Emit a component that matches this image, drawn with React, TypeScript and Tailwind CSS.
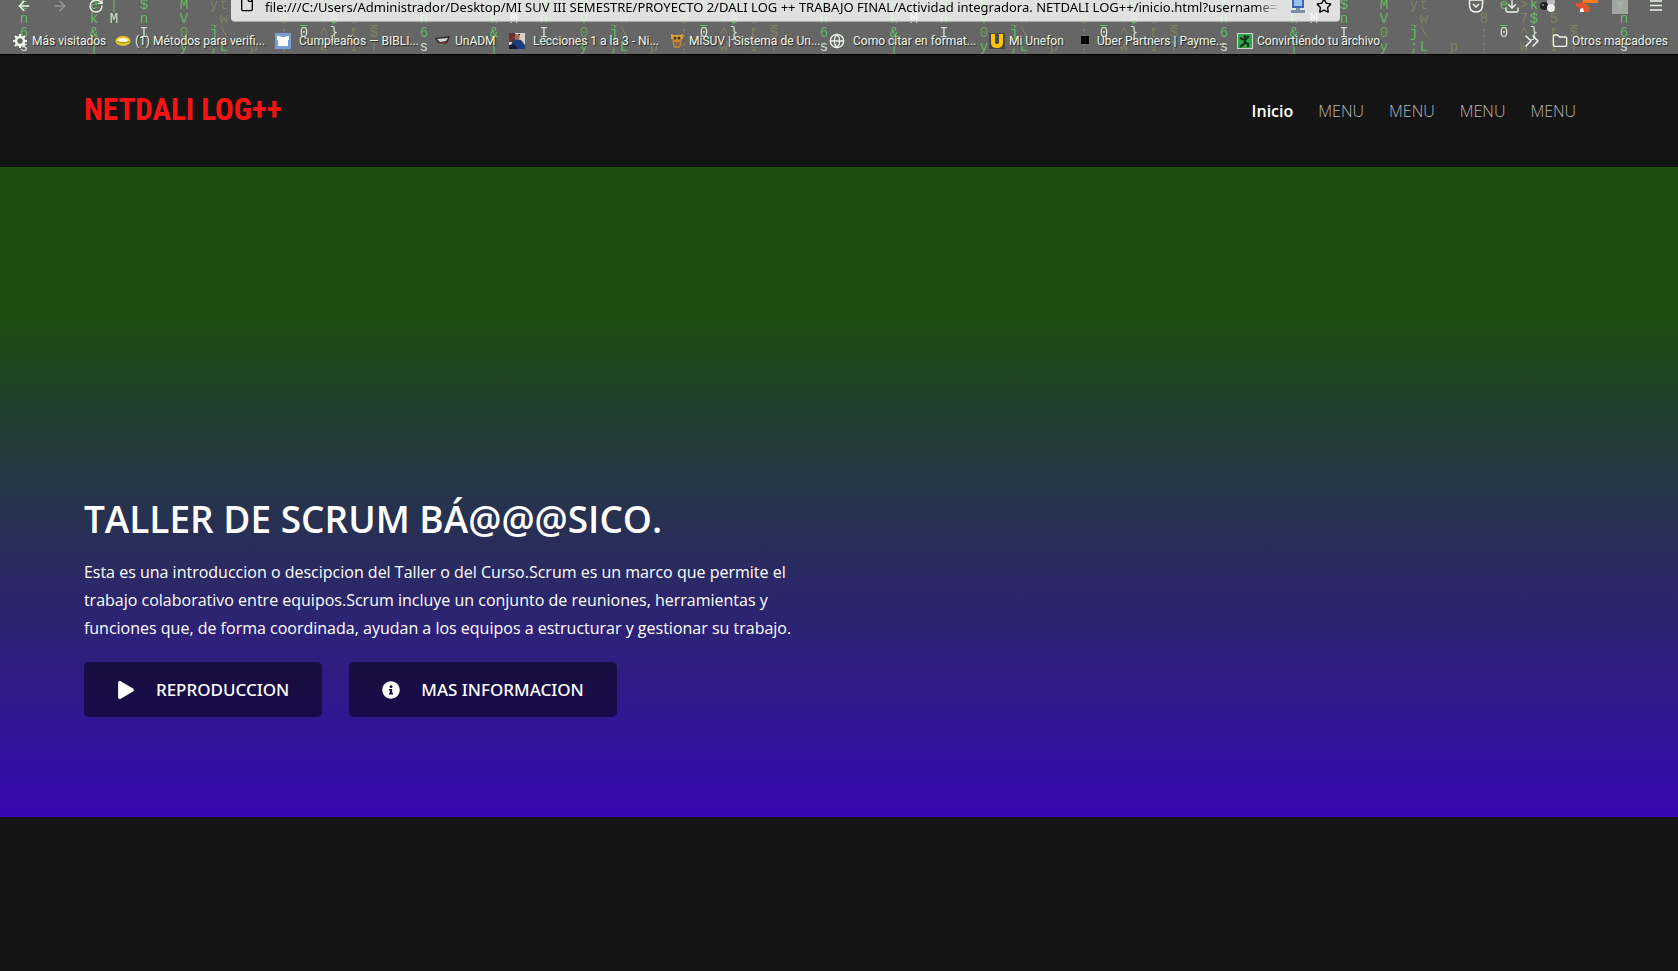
import React from "react";
import {
  ArrowLeft, ArrowRight, RotateCw, File, Globe, Folder, ChevronsRight, Star, Download,
} from "lucide-react";
import { FaPlay, FaInfoCircle } from "react-icons/fa";

type Glyph = [number, number, string, string];

const GREEN = "#5fbf5f";
const PALE = "#cfe3cf";
const DIM = "#7f8060";

const glyphs: Glyph[] = [
  [24, 0, "t", GREEN], [94, 0, "e", GREEN], [114, 0, "|", GREEN], [144, 0, "$", GREEN], [184, 0, "M", GREEN],
  [214, 0, "y", DIM], [224, 0, "t", DIM], [284, 0, "'", DIM], [304, 0, "e", GREEN], [324, 0, ">", DIM], [334, 0, "k", GREEN],
  [24, 1, "n", GREEN], [94, 1, "k", GREEN], [114, 1, "M", PALE], [144, 1, "n", GREEN], [184, 1, "V", GREEN],
  [224, 1, "w", DIM], [284, 1, "8", DIM], [324, 1, "7", DIM], [334, 1, "$", GREEN], [354, 1, "5", DIM],
  [24, 2, "6", GREEN], [94, 2, "&", GREEN], [144, 2, "I", PALE], [184, 2, "0", "#6f9a60"], [214, 2, "j", GREEN],
  [224, 2, "\\", DIM], [284, 2, ":", DIM], [304, 2, "0", PALE], [324, 2, "^", DIM], [334, 2, "}", PALE],
  [354, 2, "t", DIM], [374, 2, "$", DIM],
  [24, 3, "s", PALE], [94, 3, "|", GREEN], [184, 3, "y", GREEN], [214, 3, ";", GREEN], [224, 3, "L", GREEN],
  [254, 3, "p", DIM], [284, 3, ":", DIM], [324, 3, "W", DIM], [354, 3, "I", DIM], [374, 3, "T", DIM],
];
const overlines: [number, string][] = [[214, DIM], [304, GREEN], [374, DIM]];

function CodeRain() {
  return (
    <svg aria-hidden="true" className="absolute inset-0 h-full w-full">
      <defs>
        <pattern id="code-rain" width="400" height="56" patternUnits="userSpaceOnUse">
          <g fontFamily='"Liberation Mono", monospace' fontSize="14" textAnchor="middle">
            {glyphs.map(([x, row, ch, color]) => (
              <text key={`${x}-${row}`} x={x} y={9 + row * 14} fill={color}>{ch}</text>
            ))}
            {overlines.map(([x, color]) => (
              <path key={x} d={`M${x - 4} 25.5h8`} stroke={color} />
            ))}
          </g>
        </pattern>
      </defs>
      <rect width="100%" height="100%" fill="url(#code-rain)" />
    </svg>
  );
}

const gear = (
  <svg viewBox="0 0 16 16" className="size-4" fill="none" stroke="currentColor">
    <circle cx="8" cy="8" r="4" strokeWidth="2.500" />
    <path d="M8 1v3M8 12v3M1 8h3M12 8h3M3 3l2 2M11 11l2 2M13 3l-2 2M5 11l-2 2" strokeWidth="2" />
  </svg>
);
const ring = (
  <svg viewBox="0 0 16 16" className="size-4">
    <ellipse cx="8" cy="8" rx="7.5" ry="5" fill="#e6c62a" />
    <ellipse cx="8" cy="7.5" rx="5.5" ry="2.5" fill="#f7f3c8" />
    <path d="M2 8.500q6 3 12 0" stroke="#a67c08" fill="none" />
    <path d="M4 8l4-1.500 4 2" stroke="#fff" fill="none" />
  </svg>
);
const shirt = (
  <svg viewBox="0 0 16 16" className="size-4">
    <path fill="#759fd0" d="M0 0h16v16H0z" />
    <path fill="#fff" d="M2 3h3l1 1h4l1-1h3v4h-1v6H3V7H2z" />
  </svg>
);
const mouth = (
  <svg viewBox="0 0 16 16" className="size-4">
    <path fill="#2d3230" d="M0 5l6-1 9-1-2 6-4 3H5L2 9z" />
    <path fill="#d5dad5" d="M2 6l11-1-2 3-6 1z" />
    <path d="M4 10q4 1 7-1" stroke="#c33b3b" fill="none" />
    <path d="M4 11.500h5" stroke="#3a9a55" />
  </svg>
);
const portrait = (
  <svg viewBox="0 0 16 16" className="size-4">
    <path fill="#d8cfc8" d="M0 0h16v16H0z" />
    <path fill="#6b3430" d="M0 0h6v9H0z" />
    <path fill="#1c3f7c" d="M3 9l4-3 5 1 4 5v4H2z" />
    <circle cx="8" cy="4" r="2.500" fill="#a9694d" />
    <path d="M5 3q3-4 6 0v-2H6z" fill="#22181a" />
    <path fill="#141c36" d="M0 12l5-1 4 5H0z" />
  </svg>
);
const owl = (
  <svg viewBox="0 0 16 16" className="size-4">
    <path fill="#c08a30" d="M3 4h10l-1 9-2 2H6l-2-2z" />
    <path fill="#d9a040" d="M2 1l3 1h6l3-1v5H2z" />
    <circle cx="6" cy="5" r="1.500" fill="#4a3418" />
    <circle cx="10" cy="5" r="1.500" fill="#4a3418" />
    <path stroke="#5c4a8a" d="M6 9v4M8 9v5M10 9v4" />
  </svg>
);
const unefon = (
  <svg viewBox="0 0 16 16" className="size-4">
    <path fill="#474747" d="M0 0h16v16H0z" />
    <path d="M4 1v8.500q0 3.500 4 3.500t4-3.500V1" stroke="#ffc400" strokeWidth="4" fill="none" />
  </svg>
);
const square = (
  <svg viewBox="0 0 16 16" className="size-4">
    <path fill="#000" d="M4 3h8v8H4z" />
  </svg>
);
const runner = (
  <svg viewBox="0 0 16 16" className="size-4">
    <path fill="#cfd6cf" d="M0 0h16v16H0z" />
    <path fill="#2fa346" d="M1 1h14v14H1z" />
    <path d="M3 5l5 2 4-4M8 6v4l-5 4M8 9l3 2v3" stroke="#102a16" strokeWidth="2" fill="none" />
    <circle cx="8" cy="3.500" r="1.500" fill="#102a16" />
  </svg>
);

const bookmarks: { label: string; icon: React.ReactNode; box: string }[] = [
  { label: "Más visitados", icon: gear, box: "w-[103px] gap-1" },
  { label: "(1) Métodos para verifi...", icon: ring, box: "w-[160px] gap-1" },
  { label: "Cumpleaños — BIBLI...", icon: shirt, box: "w-[160px] gap-2" },
  { label: "UnADM", icon: mouth, box: "w-[74px] gap-1" },
  { label: "Lecciones 1 a la 3 - Ni...", icon: portrait, box: "w-[160px] gap-2" },
  { label: "MiSUV | Sistema de Un...", icon: owl, box: "w-[160px] gap-1" },
  { label: "Como citar en format...", icon: <Globe className="size-4" />, box: "w-[160px] gap-2" },
  { label: "Mi Unefon", icon: unefon, box: "w-[88px] gap-1" },
  { label: "Uber Partners | Payme...", icon: square, box: "w-[160px] gap-1" },
  { label: "Convirtiéndo tu archivo", icon: runner, box: "w-[160px] gap-1" },
];

function Chrome() {
  return (
    <div className="relative h-[55px] overflow-hidden border-b border-black bg-[#666] font-['Roboto',sans-serif] text-xs text-[#eef6ea]">
      <CodeRain />
      <div className="relative flex h-[22px] items-start">
        <div className="-mt-0.5 flex w-[231px] shrink-0 gap-5 pl-4">
          <button aria-label="Atrás"><ArrowLeft className="size-4" /></button>
          <button aria-label="Adelante" className="text-[#999]"><ArrowRight className="size-4" /></button>
          <button aria-label="Recargar"><RotateCw className="size-4" /></button>
        </div>
        <div className="flex h-[22px] min-w-0 flex-1 items-start gap-2.5 rounded-b-sm border-b border-[#aaa] bg-white/80 px-2 text-black">
          <File className="-mt-1 size-4 shrink-0" />
          <div className="min-w-0 flex-1 [mask-image:linear-gradient(to_left,transparent,black_24px)]">
            <input
              aria-label="Dirección"
              readOnly
              className="-mt-0.5 h-[18px] w-full bg-transparent font-['Noto_Sans',sans-serif] text-[13px] outline-none"
              value="file:///C:/Users/Administrador/Desktop/MI SUV III SEMESTRE/PROYECTO 2/DALI LOG ++ TRABAJO FINAL/Actividad integradora. NETDALI LOG++/inicio.html?username="
            />
          </div>
          <svg viewBox="0 0 16 16" className="-mt-0.5 size-4 shrink-0">
            <path fill="#3f63ad" d="M2 0h12v10H2z" />
            <path fill="#9cc0ee" d="M4 2h8v6H4z" />
            <path fill="#7f8ea6" d="M6 10h4v2h5v3H1v-3h5z" />
          </svg>
          <button aria-label="Añadir a marcadores"><Star className="-mt-0.5 size-4" /></button>
        </div>
        <div className="-mt-0.5 flex w-[338px] shrink-0 justify-end gap-5 pr-3.5">
          <svg viewBox="0 0 16 16" className="size-4" fill="none" stroke="currentColor" strokeWidth="1.500">
            <path d="M1.500 2h13v5q0 7-6.500 7T1.500 7zM5 6l3 3 3-3" />
          </svg>
          <button aria-label="Descargas"><Download className="size-4" /></button>
          <svg viewBox="0 0 16 16" className="size-4">
            <circle cx="11" cy="4" r="4" fill="#bbb" />
            <circle cx="4" cy="8" r="4" fill="#222" />
            <circle cx="3" cy="7" r="1" fill="#999" />
            <circle cx="11" cy="10" r="4" fill="#eee" />
          </svg>
          <svg viewBox="0 0 16 16" className="size-4 overflow-visible">
            <path fill="#e0562a" d="M0 4l3 2 5-4 2 4 4 4-1 4H3l1-4-4-2z" />
            <path fill="#fff" d="M4 11l3-1 1 4H4z" />
            <path fill="#ff7a1a" d="M7 0h15v5H7z" />
          </svg>
          <svg viewBox="0 0 16 16" className="size-4">
            <path fill="#a0a6a0" d="M0 0h16v16H0z" />
            <path d="M5 5h6M8 5v6" stroke="#b0b8b0" strokeWidth="1" />
          </svg>
          <button aria-label="Menú">
            <svg viewBox="0 0 16 16" className="size-4" stroke="currentColor" strokeWidth="1.500">
              <path d="M2 3h12M2 7.500h12M2 12h12" />
            </svg>
          </button>
        </div>
      </div>
      <nav aria-label="Marcadores" className="relative flex h-[37px] items-center pl-3 [text-shadow:1px_1px_1px_#222]">
        {bookmarks.map((b) => (
          <a key={b.label} href="#" className={`flex shrink-0 items-center whitespace-nowrap ${b.box}`}>
            {b.icon}
            {b.label}
          </a>
        ))}
        <div className="ml-auto flex items-center gap-2 pr-2.5">
          <button aria-label="Más marcadores"><ChevronsRight className="size-6" strokeWidth={1.5} /></button>
          <a href="#" className="flex items-center gap-1 whitespace-nowrap"><Folder className="size-4" />Otros marcadores</a>
        </div>
      </nav>
    </div>
  );
}

const links = ["Inicio", "MENU", "MENU", "MENU", "MENU"];

export default function App() {
  return (
    <div className="min-h-screen bg-[#141414] font-['Open_Sans',sans-serif] text-white">
      <Chrome />
      <header className="flex h-28 items-center justify-between px-[5%]">
        <a href="#" className="pb-0.5 font-['Roboto_Condensed','Liberation_Sans_Narrow',sans-serif] text-[31px] font-bold text-[#f41414]">
          NETDALI LOG++
        </a>
        <nav className="flex gap-[25px] pr-[18px] text-base">
          {links.map((l, i) => (
            <a key={i} href="#" className={i === 0 ? "font-semibold" : "font-light text-[#b8b8b8]"}>{l}</a>
          ))}
        </nav>
      </header>
      <main className="flex min-h-[650px] flex-col justify-end bg-linear-to-b/srgb from-[#1c4f0b] from-21% to-[#3708b3] px-[5%] pb-[100px]">
        <h1 className="text-[37px] leading-[52px] font-semibold">TALLER DE SCRUM BÁ@@@SICO.</h1>
        <p className="mt-[13px] max-w-[740px] text-base leading-7">
          Esta es una introduccion o descipcion del Taller o del Curso.Scrum es un marco que permite el trabajo
          colaborativo entre equipos.Scrum incluye un conjunto de reuniones, herramientas y funciones que, de forma
          coordinada, ayudan a los equipos a estructurar y gestionar su trabajo.
        </p>
        <div className="mt-5 flex gap-[27px] font-['Noto_Sans',sans-serif] text-[17px] font-medium">
          <button className="flex h-[55px] items-center gap-[21px] rounded-[5px] bg-black/50 px-[33px]">
            <FaPlay className="size-[18px]" />REPRODUCCION
          </button>
          <button className="flex h-[55px] items-center gap-[21px] rounded-[5px] bg-black/50 px-[33px]">
            <FaInfoCircle className="size-[18px]" />MAS INFORMACION
          </button>
        </div>
      </main>
    </div>
  );
}
